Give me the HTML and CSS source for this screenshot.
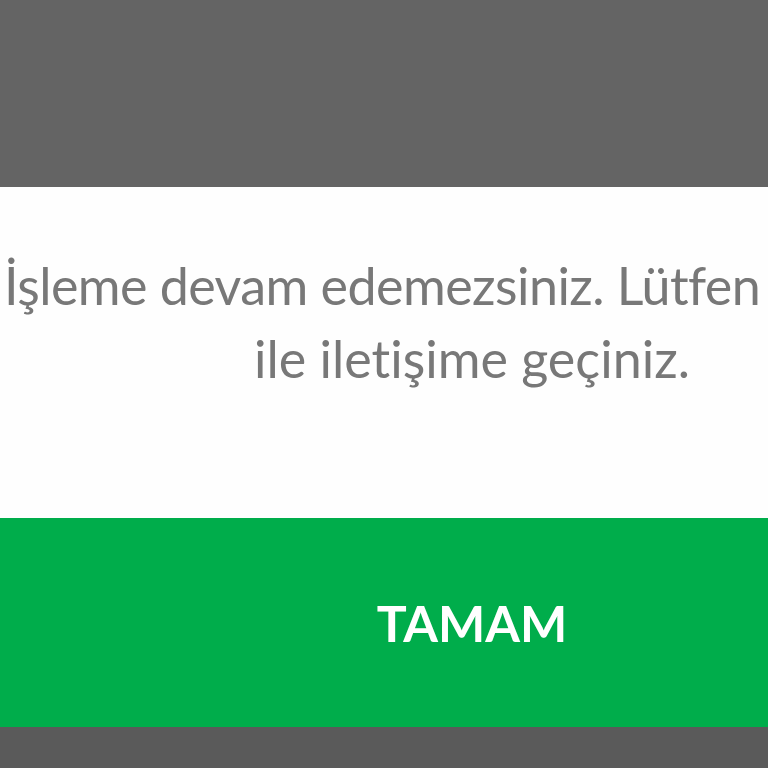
FILE: index.html
```html
<!DOCTYPE html>
<html lang="tr">
<head>
<meta charset="utf-8">
<link rel="stylesheet" href="styles.css">
</head>
<body>
<div class="screen">
  <div class="backdrop-top"></div>
  <div class="dialog">
    <div class="message">
      <p class="line line-first">İşleme devam edemezsiniz. Lütfen</p>
      <p class="line line-second">ile iletişime geçiniz.</p>
    </div>
    <div class="button">TAMAM</div>
  </div>
  <div class="backdrop-bottom"></div>
</div>
</body>
</html>
```

FILE: styles.css
```css
html, body {
  margin: 0;
  padding: 0;
  background: #5a5a5a;
  overflow: hidden;
}
.screen {
  width: 768px;
  height: 768px;
  overflow: hidden;
  display: flex;
  flex-direction: column;
}
.backdrop-top {
  height: 187px;
  background: #646464;
  flex: none;
}
.dialog {
  width: 944px;
  flex: none;
  display: flex;
  flex-direction: column;
}
.message {
  height: 331px;
  background: #fefefe;
  box-sizing: border-box;
  padding-top: 62px;
  font-family: Lato, "Noto Sans", sans-serif;
  font-size: 52px;
  line-height: 73px;
  color: #787878;
  font-variant-ligatures: none;
}
.line {
  margin: 0;
  white-space: nowrap;
}
.line-first {
  width: fit-content;
  padding-left: 4px;
  letter-spacing: -0.55px;
}
.line-second {
  text-align: center;
}
.button {
  height: 209px;
  background: #00ad4b;
  color: #ffffff;
  font-family: Lato, "Noto Sans", sans-serif;
  font-weight: 700;
  font-size: 50px;
  display: flex;
  align-items: center;
  justify-content: center;
}
.backdrop-bottom {
  flex: 1;
  background: #5a5a5a;
}
```
